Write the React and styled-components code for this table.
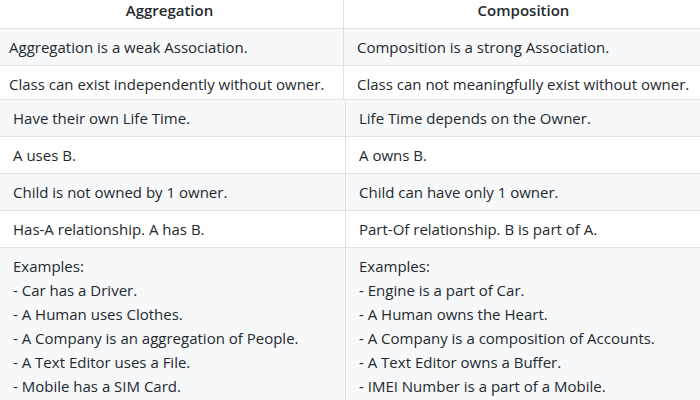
import React from 'react';
import styled, { createGlobalStyle } from 'styled-components';

const GlobalStyle = createGlobalStyle`
  html, body {
    margin: 0;
    padding: 0;
    background: #fff;
  }
`;

const Page = styled.div`
  width: 700px;
  height: 400px;
  overflow: hidden;
  background: #fff;
  font-family: 'Open Sans', 'Noto Sans', sans-serif;
  font-size: 15px;
  line-height: 24px;
  color: #24292e;
`;

const Clip = styled.div`
  height: ${(p) => p.$height}px;
  overflow: hidden;
`;

const Table = styled.table`
  border-collapse: collapse;
  border-spacing: 0;
  table-layout: fixed;
  width: ${(p) => p.$width}px;
  margin-left: ${(p) => p.$left}px;
  margin-top: ${(p) => p.$top || 0}px;
`;

const Row = styled.tr`
  background: ${(p) => (p.$striped ? '#f6f8fa' : '#fff')};
  border-top: 1px solid #dfe2e5;
`;

const HeadCell = styled.th`
  padding: 6px 13px;
  border: 1px solid #dfe2e5;
  font-weight: 600;
  text-align: center;
`;

const Cell = styled.td`
  padding: 6px 13px;
  border: 1px solid #dfe2e5;
  text-align: left;
  vertical-align: top;
  white-space: nowrap;
`;

const topRows = [
  ['Aggregation is a weak Association.', 'Composition is a strong Association.'],
  ['Class can exist independently without owner.', 'Class can not meaningfully exist without owner.'],
];

const bottomRows = [
  ['Have their own Life Time.', 'Life Time depends on the Owner.'],
  ['A uses B.', 'A owns B.'],
  ['Child is not owned by 1 owner.', 'Child can have only 1 owner.'],
  ['Has-A relationship. A has B.', 'Part-Of relationship. B is part of A.'],
];

const examples = [
  [
    'Examples:',
    '- Car has a Driver.',
    '- A Human uses Clothes.',
    '- A Company is an aggregation of People.',
    '- A Text Editor uses a File.',
    '- Mobile has a SIM Card.',
  ],
  [
    'Examples:',
    '- Engine is a part of Car.',
    '- A Human owns the Heart.',
    '- A Company is a composition of Accounts.',
    '- A Text Editor owns a Buffer.',
    '- IMEI Number is a part of a Mobile.',
  ],
];

const Lines = ({ items }) => (
  <>
    {items.map((t, i) => (
      <React.Fragment key={i}>
        {i > 0 && <br />}
        {t}
      </React.Fragment>
    ))}
  </>
);

export default function App() {
  return (
    <Page>
      <GlobalStyle />
      <Clip $height={99}>
        <Table $width={708} $left={-5} $top={-9}>
          <colgroup>
            <col style={{ width: 348 }} />
            <col style={{ width: 360 }} />
          </colgroup>
          <thead>
            <Row>
              <HeadCell>Aggregation</HeadCell>
              <HeadCell>Composition</HeadCell>
            </Row>
          </thead>
          <tbody>
            {topRows.map((r, i) => (
              <Row key={i} $striped={i % 2 === 0}>
                <Cell>{r[0]}</Cell>
                <Cell>{r[1]}</Cell>
              </Row>
            ))}
          </tbody>
        </Table>
      </Clip>
      <Table $width={712} $left={-1}>
        <colgroup>
          <col style={{ width: 346 }} />
          <col style={{ width: 366 }} />
        </colgroup>
        <tbody>
          {bottomRows.map((r, i) => (
            <Row key={i} $striped={i % 2 === 0}>
              <Cell>{r[0]}</Cell>
              <Cell>{r[1]}</Cell>
            </Row>
          ))}
          <Row $striped>
            <Cell>
              <Lines items={examples[0]} />
            </Cell>
            <Cell>
              <Lines items={examples[1]} />
            </Cell>
          </Row>
        </tbody>
      </Table>
    </Page>
  );
}
